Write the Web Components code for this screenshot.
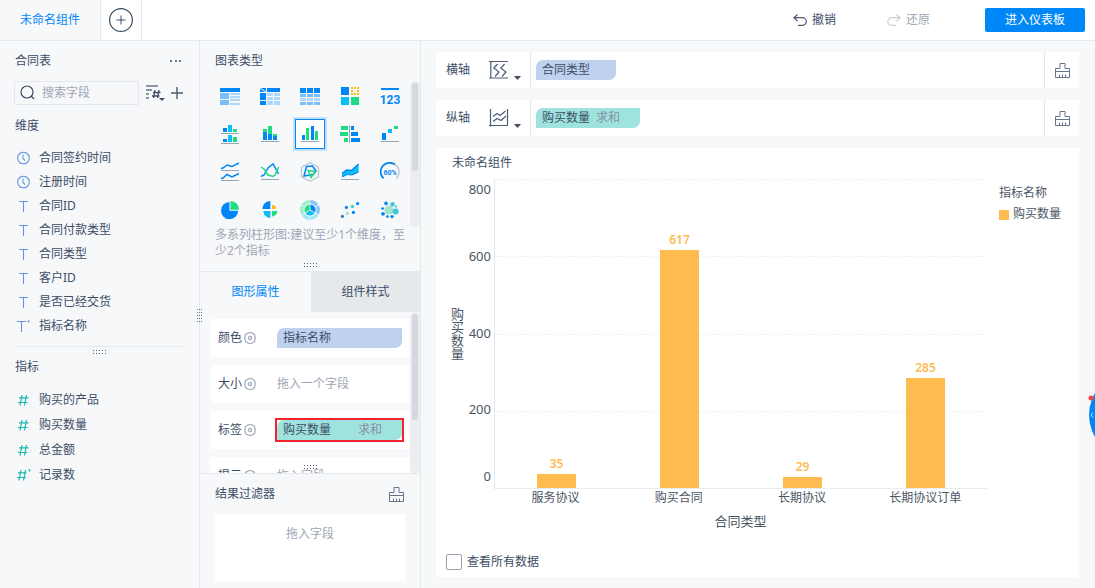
<!DOCTYPE html>
<html lang="zh-CN">
<head>
<meta charset="utf-8">
<title>未命名组件</title>
<style>
  body {
    margin: 0;
    overflow: hidden;
    font: 12px/20px "Noto Sans", "Noto Sans CJK SC", sans-serif;
    color: #3d4d66;
    background: #f7f8fa;
    --line: #e6e9ec;
    --blue: #0087f7;
    --muted: #9ea6b4;
    --dim: #bed2ef;
    --measure: #9fe3df;
    --bar: #fdbb50;
  }
</style>
</head>
<body>
<bi-app></bi-app>

<script>
const B = '#0087f5', C = '#0cbff2', G = '#1fdc80', L = '#aed7fb', M = '#7abef8', Y = '#f9be12', S = '#9ba6b5', D = '#3d4d66';
const r = (x, y, w, h, f) => `<rect x="${x}" y="${y}" width="${w}" height="${h}" fill="${f}"/>`;
const dot = (x, y, q, f) => `<circle cx="${x}" cy="${y}" r="${q}" fill="${f}"/>`;
const pl = (p, c, w = 1.5) => `<path d="${p}" fill="none" stroke="${c}" stroke-width="${w}"/>`;
const base = r(1, 17, 18, 1, S);
const ring = () => {
  let s = '';
  for (let i = 0; i < 6; i++) {
    s += `<circle cx="10" cy="10" r="8.2" fill="none" stroke="${['#8cc4fa', '#9fe8f8', '#9fe8f8', '#9eeec4', '#9eeec4', '#8cc4fa'][i]}" stroke-width="3.4" stroke-dasharray="7.8 43.72" transform="rotate(${i * 60 - 28} 10 10)"/>`;
  }
  return s;
};
const grid3 = (xs, ys, w, h, f) => ys.map(y => xs.map(x => r(x, y, w, h, f)).join('')).join('');

/* name: [width, height, drawing] */
const ICONS = {
  table: [20, 20, r(0, 2, 20, 4, B) + r(0, 7, 9, 6, M) + r(0, 14, 9, 5, M) + grid3([10], [7, 10, 13, 17], 10, 2, L)],
  cross: [20, 20, r(0, 2, 6, 4, B) + pl('M0 2L6 6', '#fff', 1) + r(7, 2, 13, 4, B) + r(0, 7, 6, 7, B) + r(0, 15, 6, 4, B) + grid3([7, 14], [7, 11, 15], 6, 3, L) + r(7, 15, 6, 4, L) + r(14, 15, 6, 4, L)],
  detail: [20, 20, grid3([0, 7, 14], [2], 6, 5, B) + grid3([0, 7, 14], [8], 6, 3, M) + grid3([0, 7, 14], [12], 6, 3, L) + grid3([0, 7, 14], [16], 6, 3, M)],
  color: [20, 20, r(1, 1, 8, 8, B) + grid3([11, 14, 17], [1, 7], 2, 2, Y) + r(11, 4, 2, 2, Y) + r(17, 4, 2, 2, Y) + r(1, 11, 8, 8, C) + r(11, 11, 8, 8, G)],
  kpi: [20, 20, r(1, 2, 18, 2, B) + `<text x="10" y="18" text-anchor="middle" font-family="Roboto, sans-serif" font-weight="700" font-size="12" fill="${B}">123</text>`],
  split: [20, 20, r(3, 4, 4, 4, B) + r(8, 1, 4, 7, C) + r(13, 5, 4, 3, G) + r(1, 9, 18, 1, S) + r(3, 15, 4, 3, B) + r(8, 11, 4, 7, C) + r(13, 13, 4, 5, G) + r(1, 19, 18, 1, S)],
  stack: [20, 20, r(3, 5, 4, 3, G) + r(3, 8, 4, 8, B) + r(8, 2, 4, 8, G) + r(8, 10, 4, 6, B) + r(13, 10, 4, 2, G) + r(13, 12, 4, 4, B) + base],
  multi: [20, 20, r(2, 11, 3, 5, B) + r(6, 4, 3, 12, G) + r(11, 2, 3, 14, B) + r(15, 7, 3, 9, G) + base],
  compare: [20, 20, r(9, 1, 1, 18, S) + r(1, 2, 7, 4, G) + r(0, 8, 8, 4, G) + r(4, 14, 4, 4, G) + r(11, 2, 3, 4, B) + r(11, 8, 7, 4, B) + r(11, 14, 9, 4, B)],
  fall: [20, 20, r(2, 9, 4, 7, B) + r(8, 5, 4, 4, C) + r(14, 2, 4, 3, G) + base],
  lines: [20, 20, pl('M1 6.500L3 6L7 3L12 4.500L19 1', B) + r(1, 8, 18, 1, S) + pl('M1 16.500L3 16L7 12.500L12 15L19 11.500', B) + r(1, 18, 18, 1, S)],
  line: [20, 20, pl('M1 14.500L4 13L8 6L13 2L18.600 12', B) + pl('M1 5L4 7L8 13L13 14.500L15 13L18.600 5', G) + base],
  radar: [20, 20, pl('M10 .7L18.500 5.300V14.700L10 19.300L1.500 14.700V5.300Z', '#bcc5d0', 1.3) + pl('M6.500 4.500L12.500 4L16 9L13 12.500L4 14Z', B, 1.6) + pl('M8 8.500L15.500 9.500L11 15.500Z', G, 1.6)],
  area: [20, 20, `<path d="M2 11.500L6.500 8L11.500 8.500L18.600 2V10L12 13L7.500 12.500L2 15Z" fill="${C}"/>` + pl('M2 11.500L6.500 8L11.500 8.500L18.600 2', B, 1.4) + pl('M2 15L7.500 12.500L12 13L18.600 10', B, 1) + base],
  gauge: [20, 20, pl('M3.600 16.400A9 9 0 0 1 15 2.500', B, 1.8) + pl('M15 2.500A9 9 0 0 1 16.400 16.400', '#c6ccd4', 1.6) + `<text x="10" y="13" text-anchor="middle" font-family="Roboto, sans-serif" font-weight="700" font-size="7" fill="${B}">60%</text>`],
  pie: [20, 20, `<path d="M9.500 2A8.600 8.600 0 1 0 18.200 10.800H9.500Z" fill="${B}"/><path d="M10.500 1A8.600 8.600 0 0 1 19 9.800H10.500Z" fill="${G}"/>`],
  rose: [20, 20, `<path d="M10.400 9V1A8 8 0 0 0 2.400 9Z" fill="${B}"/><path d="M12 9V5A4 4 0 0 1 16 9Z" fill="${Y}"/><path d="M10.400 11V18A7 7 0 0 1 3.400 11Z" fill="${C}"/><path d="M12 11V16.400A5.400 5.400 0 0 0 17.400 11Z" fill="${G}"/>`],
  sun: [20, 20, ring() + `<path d="M10 10V4.500A5.500 5.500 0 0 1 14.800 12.700Z" fill="${B}"/><path d="M10 10L14.800 12.700A5.500 5.500 0 0 1 5.200 12.700Z" fill="${C}"/><path d="M10 10L5.200 12.700A5.500 5.500 0 0 1 10 4.500Z" fill="${G}"/>` + pl('M10 10V4M10 10L15.500 13.100M10 10L4.500 13.100', '#fff', .7)],
  scatter: [20, 20, dot(2.4, 16.4, 1.6, '#3677c4') + dot(6.4, 7.4, 1.6, B) + dot(12.4, 6.4, 1.6, '#43c5d8') + dot(7.4, 13.4, 1.6, '#9fe5cb') + dot(13.4, 12.4, 1.6, B) + dot(17.6, 3.6, 1.6, B)],
  bubble: [20, 20, dot(9, 10, 4.6, '#9fe5cb') + dot(6, 3.4, 1.8, B) + dot(12.6, 4.2, 2.2, '#43c5d8') + dot(15.6, 11.6, 3, '#43c5d8') + dot(2.6, 8.6, 1.4, B) + dot(3, 13.8, 1.9, B) + dot(7.4, 16.6, 1.4, B) + dot(12, 16.6, 1.7, B) + dot(16, 6.6, 1.1, '#43c5d8')],
  plusRing: [24, 24, `<circle cx="12" cy="12" r="11.400" fill="#fff" stroke="${D}" stroke-width="1.200"/>` + pl('M7.500 12H16.500M12 7.500V16.500', D, 1)],
  undo: [14, 14, pl('M4.500 1.500L1 4.700L4.500 8M1 4.700H9.500A3.600 3.600 0 0 1 9.500 12.300H5', '#4b5a70', 1.2)],
  redo: [14, 14, pl('M9.500 1.500L13 4.700L9.500 8M13 4.700H4.500A3.600 3.600 0 0 0 4.500 12.300H9', '#ccd1d8', 1.2)],
  more: [12, 4, r(0, 1, 2, 2, '#66758c') + r(5, 1, 2, 2, '#66758c') + r(9, 1, 2, 2, '#66758c')],
  search: [16, 16, `<circle cx="7" cy="7" r="6" fill="none" stroke="${D}" stroke-width="1.200"/>` + pl('M11.300 11.300L14 14', D, 1.3)],
  sort: [20, 20, r(0, 2, 12, 2, '#8b95a5') + r(0, 6, 6, 2, '#8b95a5') + r(0, 10, 3, 2, '#8b95a5') + r(0, 14, 3, 2, '#8b95a5') + pl('M9 7L7.500 15M13 7L11.500 15M7 9.500H14.500M6 13H13.500', D, 1.3) + `<path d="M13 15H19L16 18Z" fill="${D}"/>`],
  plus: [12, 12, pl('M0 6H12M6 0V12', '#4b5a70', 1.4)],
  clock: [14, 14, pl('M6.500 1.200A5.800 5.800 0 1 1 6.490 1.200M6 3.500V7.500L8 9.500', '#6296dc', 1.1)],
  text: [14, 14, pl('M2 2.500H11M6.500 2.500V13', '#6296dc', 1.1)],
  textStar: [14, 14, pl('M0 2.500H9M4.500 2.500V13', '#6296dc', 1.1) + pl('M11.500 1V3.500M10.500 2L12.500 3M12.500 2L10.500 3', '#6296dc', .8)],
  hash: [14, 14, pl('M5 2L3 12.500M9.500 2L7.500 12.500M2 4.800H11.500M1 9.500H10.500', '#1ab8ac', 1.2)],
  hashStar: [14, 14, pl('M4 2L2 12.500M8.500 2L6.500 12.500M1 4.800H9.500M0 9.500H9', '#1ab8ac', 1.2) + pl('M12.500 1V3.500M11.500 2L13.500 3M13.500 2L11.500 3', '#1ab8ac', .8)],
  brush: [15, 15, pl('M.5 14.500V5.500H5V.5H10V5.500H14.500V14.500ZM.5 8.500H14.500M4.500 14V11.500M7.500 14V11.500M10.500 14V11.500', '#66758c', 1)],
  gear: [12, 12, pl('M4 1Q6 0 8 1L10.500 2.500L11 5L11.400 6L11 7L10.500 9.500L8 11Q6 12 4 11L1.500 9.500L1 7L.6 6L1 5L1.500 2.500Z', '#a3abb8', 1.2) + `<circle cx="6" cy="6" r="1.600" fill="none" stroke="#a3abb8" stroke-width="1.300"/>`],
  axisX: [20, 20, pl('M0 1.500H19M0 18H19M1.800 1.500V18M8.600 4L4.800 8L10 12L6 16.500M15.600 4L11.800 8L17 12L13 16.500', '#4b5c75', 1.2)],
  axisY: [20, 20, pl('M1.500 1V18.500M0 17.500H19M18.500 1V17.500M4 8.500L8 5.500L11 7.500L16.500 3M4 13.500L8 10.500L12 12.500L17 8', '#4b5c75', 1.2)],
  caret: [8, 4, `<path d="M0 0H7L3.500 4Z" fill="${D}"/>`],
  gripH: [13, 5, grid3([0, 3, 6, 9, 12], [0, 3], 1, 1, '#56647a')],
  gripV: [5, 13, grid3([0, 2, 4], [0, 3, 6, 9, 12], 1, 1, '#6b788c')],
  helper: [8, 46, dot(45, 23, 43, B) + pl('M6 20.500L4 23L6 25.500', '#bfe0ff', 1) + dot(4, 6, 2.5, '#fb4343')]
};

const define = (name, html, setup) => {
  const t = document.createElement('template');
  t.innerHTML = html;
  customElements.define(name, class extends HTMLElement {
    constructor() {
      super();
      this.attachShadow({ mode: 'open' }).append(t.content.cloneNode(true));
    }
    connectedCallback() {
      if (setup) setup(this, this.shadowRoot);
    }
  });
};
const RESET = `
  * { box-sizing: border-box; }
  button { font: inherit; color: inherit; background: none; border: 0; padding: 0; margin: 0; cursor: pointer; }
  p, h2, h3, ul { margin: 0; padding: 0; font: inherit; }
`;

define('bi-icon', `<style>:host { display: inline-flex; flex: none; } svg { display: block; overflow: hidden; }</style>`, (el, root) => {
  const [w, h, art] = ICONS[el.getAttribute('name')];
  const box = document.createElement('template');
  box.innerHTML = `<svg width="${w}" height="${h}" viewBox="0 0 ${w} ${h}" aria-hidden="true">${art}</svg>`;
  root.append(box.content);
});

define('bi-scrollbar', `
<style>
  :host { display: flex; flex: none; width: 10px; padding: 2px; box-sizing: border-box; border-radius: 5px; background: #ecedf1; }
  i { width: 6px; border-radius: 3px; height: var(--thumb); background: #d6d8df; }
</style><i></i>`);

define('bi-header', `
<style>${RESET}
  :host { display: flex; align-items: stretch; height: 41px; box-sizing: border-box; background: #fff; border-bottom: 1px solid var(--line); }
  .tab { width: 101px; background: #f7f8fa; border-right: 1px solid var(--line); color: var(--blue); }
  .add { width: 41px; display: grid; place-items: center; border-right: 1px solid var(--line); }
  nav { display: flex; align-items: center; margin-left: auto; padding-right: 10px; }
  nav button { display: flex; align-items: center; gap: 5px; }
  .redo { margin: 0 55px 0 51px; color: var(--muted); }
  nav .go { justify-content: center; width: 100px; height: 24px; border-radius: 2px; background: var(--blue); color: #fff; }
</style>
<button class="tab">未命名组件</button>
<button class="add" aria-label="添加组件"><bi-icon name="plusRing"></bi-icon></button>
<nav>
  <button><bi-icon name="undo"></bi-icon>撤销</button>
  <button class="redo"><bi-icon name="redo"></bi-icon>还原</button>
  <button class="go">进入仪表板</button>
</nav>`);

define('bi-field', `
<style>
  :host { display: flex; align-items: center; height: var(--row, 24px); padding-left: 2px; }
  .icon { display: flex; width: 22px; }
</style><div class="icon"></div><slot></slot>`, (el, root) => {
  root.querySelector('.icon').innerHTML = `<bi-icon name="${el.getAttribute('icon')}"></bi-icon>`;
});

define('bi-fields', `
<style>${RESET}
  :host { display: block; padding: 0 15px; border-right: 1px solid var(--line); }
  header { display: flex; align-items: center; justify-content: space-between; height: 40px; padding-right: 2px; }
  .find { display: flex; align-items: center; margin-left: -1px; }
  label { display: flex; align-items: center; width: 125px; height: 24px; padding: 0 5px; gap: 6px; border: 1px solid #e3e6ea; border-radius: 2px; }
  input { flex: 1; min-width: 0; font: inherit; color: inherit; border: 0; padding: 0; outline: 0; background: none; }
  input::placeholder { color: var(--muted); opacity: 1; }
  .sort { margin: 0 5px 0 7px; }
  button { display: flex; }
  h3 { height: 41px; line-height: 42px; }
  .split { display: flex; justify-content: center; margin-top: 8px; padding-top: 3px; border-top: 1px solid var(--line); }
  .measures { --row: 25px; }
  .measures h3 { height: 32px; line-height: 24px; }
</style>
<header><h2>合同表</h2><button aria-label="更多"><bi-icon name="more"></bi-icon></button></header>
<div class="find">
  <label><bi-icon name="search"></bi-icon><input type="text" placeholder="搜索字段" aria-label="搜索字段"></label>
  <button class="sort" aria-label="排序"><bi-icon name="sort"></bi-icon></button>
  <button aria-label="添加字段"><bi-icon name="plus"></bi-icon></button>
</div>
<section>
  <h3>维度</h3>
  <bi-field icon="clock">合同签约时间</bi-field>
  <bi-field icon="clock">注册时间</bi-field>
  <bi-field icon="text">合同ID</bi-field>
  <bi-field icon="text">合同付款类型</bi-field>
  <bi-field icon="text">合同类型</bi-field>
  <bi-field icon="text">客户ID</bi-field>
  <bi-field icon="text">是否已经交货</bi-field>
  <bi-field icon="textStar">指标名称</bi-field>
</section>
<div class="split"><bi-icon name="gripH"></bi-icon></div>
<section class="measures">
  <h3>指标</h3>
  <bi-field icon="hash">购买的产品</bi-field>
  <bi-field icon="hash">购买数量</bi-field>
  <bi-field icon="hash">总金额</bi-field>
  <bi-field icon="hashStar">记录数</bi-field>
</section>`);

define('bi-chart-types', `
<style>${RESET}
  :host { display: block; border-bottom: 1px solid var(--line); }
  h2 { padding: 10px 15px 8px; }
  .area { display: flex; justify-content: space-between; padding-left: 13px; }
  .grid { display: grid; grid-template-columns: repeat(5, 34px); grid-auto-rows: 34px; gap: 4px 6px; }
  button { display: grid; place-items: center; }
  button[aria-pressed=true] { border: 1px solid var(--blue); margin: 2px; background: #fff; box-shadow: 0 0 0 2px #c3e1fa; }
  bi-scrollbar { height: 146px; margin-top: 2px; --thumb: 88px; }
  p { padding: 0 13px 0 15px; line-height: 16px; color: var(--muted); }
  .grip { display: flex; justify-content: center; align-items: center; height: 12px; }
</style>
<h2>图表类型</h2>
<div class="area"><div class="grid"></div><bi-scrollbar></bi-scrollbar></div>
<p>多系列柱形图:建议至少1个维度，至少2个指标</p>
<div class="grip"><bi-icon name="gripH"></bi-icon></div>`, (el, root) => {
  const types = { table: '分组表', cross: '交叉表', detail: '明细表', color: '颜色表格', kpi: '指标卡', split: '分区柱形图', stack: '堆积柱形图', multi: '多系列柱形图', compare: '对比柱状图', fall: '瀑布图', lines: '分区折线图', line: '多系列折线图', radar: '雷达图', area: '面积图', gauge: '仪表盘', pie: '饼图', rose: '玫瑰图', sun: '多层饼图', scatter: '散点图', bubble: '聚合气泡图' };
  root.querySelector('.grid').innerHTML = Object.entries(types).map(([k, v]) =>
    `<button aria-label="${v}" aria-pressed="${k === 'multi'}"><bi-icon name="${k}"></bi-icon></button>`).join('');
});

define('bi-chip', `
<style>
  :host { display: flex; align-items: center; height: 20px; padding: 0 6px; box-sizing: border-box; border-radius: 7px 0 7px 0; background: var(--dim); }
  :host([measure]) { background: var(--measure); }
  ::slotted(span) { color: #858fa3; margin-left: var(--agg-gap, 6px); padding-right: 14px; }
</style><slot></slot>`);

define('bi-prop', `
<style>${RESET}
  :host { display: grid; grid-template-columns: 59px 1fr; align-items: center; flex: none; height: 38px; padding: 0 8px; background: #fff; box-sizing: border-box; color: inherit; }
  .name { display: flex; align-items: center; gap: 2px; }
  button { display: flex; }
  ::slotted(em) { font-style: normal; color: var(--muted); }
</style>
<div class="name"><slot name="label"></slot><button aria-label="设置"><bi-icon name="gear"></bi-icon></button></div>
<slot></slot>`);

define('bi-props', `
<style>${RESET}
  :host { display: flex; flex-direction: column; flex: 1; min-height: 0; position: relative; }
  .tabs { display: grid; flex: none; grid-template-columns: 111px 1fr; }
  .tabs button { height: 40px; background: var(--line); }
  .tabs button[aria-selected=true] { background: none; color: var(--blue); }
  .body { display: flex; flex: 1; min-height: 0; overflow: hidden; }
  .cards { flex: 1; display: flex; flex-direction: column; gap: 8px; padding: 7px 0 0 10px; overflow: hidden; }
  bi-scrollbar { --thumb: 106px; }
  .mark { outline: 2px solid #f3242c; --agg-gap: auto; }
  .over { position: absolute; left: 50%; bottom: 3px; margin-left: -6px; display: flex; }
</style>
<div class="tabs" role="tablist"><button role="tab" aria-selected="true">图形属性</button><button role="tab" aria-selected="false">组件样式</button></div>
<div class="body">
  <div class="cards">
    <bi-prop><span slot="label">颜色</span><bi-chip>指标名称</bi-chip></bi-prop>
    <bi-prop><span slot="label">大小</span><em>拖入一个字段</em></bi-prop>
    <bi-prop><span slot="label">标签</span><div class="mark"><bi-chip measure>购买数量<span>求和</span></bi-chip></div></bi-prop>
    <bi-prop><span slot="label">提示</span><em>拖入字段</em></bi-prop>
  </div>
  <bi-scrollbar></bi-scrollbar>
</div>
<div class="over"><bi-icon name="gripH"></bi-icon></div>`);

define('bi-filter', `
<style>${RESET}
  :host { display: block; border-top: 1px solid var(--line); padding: 0 15px 7px; }
  header { display: flex; align-items: center; justify-content: space-between; height: 40px; }
  button { display: flex; padding-right: 1px; }
  .drop { height: 67px; padding-top: 10px; text-align: center; background: #fff; color: var(--muted); }
</style>
<header><h2>结果过滤器</h2><button aria-label="清空"><bi-icon name="brush"></bi-icon></button></header>
<div class="drop">拖入字段</div>`);

define('bi-config', `
<style>
  :host { display: flex; flex-direction: column; min-height: 0; position: relative; border-right: 1px solid var(--line); }
  .side { position: absolute; left: -3px; top: 268px; display: flex; }
</style>
<bi-chart-types></bi-chart-types><bi-props></bi-props><bi-filter></bi-filter>
<div class="side"><bi-icon name="gripV"></bi-icon></div>`);

define('bi-axis', `
<style>${RESET}
  :host { display: flex; align-items: stretch; height: 36px; background: #fff; }
  .name { display: flex; align-items: center; width: 95px; padding-left: 10px; border-right: 1px solid var(--line); }
  .kind { display: flex; align-items: flex-end; gap: 5px; margin-left: 19px; }
  .drop { flex: 1; display: flex; align-items: center; padding-left: 5px; }
  .clear { display: grid; place-items: center; width: 35px; border-left: 1px solid var(--line); }
</style>
<div class="name"><slot name="label"></slot><button class="kind" aria-label="坐标轴类型"></button></div>
<div class="drop"><slot></slot></div>
<button class="clear" aria-label="清空"><bi-icon name="brush"></bi-icon></button>`, (el, root) => {
  root.querySelector('.kind').innerHTML = `<bi-icon name="${el.getAttribute('icon')}"></bi-icon><bi-icon name="caret"></bi-icon>`;
});

define('bi-bar-chart', `
<style>${RESET}
  :host { flex: 1; min-height: 0; display: flex; flex-direction: column; background: #fff; }
  h2 { padding: 5px 16px 6px; }
  .chart { flex: 1; min-height: 0; display: grid; padding-left: 14px; color: #4a5563;
    grid-template: minmax(0, 1fr) 18px 28px / 14px 30px minmax(0, 1fr) 92px; }
  .ytitle { writing-mode: vertical-rl; text-orientation: upright; text-align: center; font-size: 13px; line-height: 14px; }
  .ticks { display: grid; grid-template-rows: 1fr 2fr 2fr 2fr 1fr; align-items: center; padding: 0 3px 3px 0; text-align: right; font-size: 13px; line-height: 20px; }
  .ticks > :first-child { align-self: start; }
  .ticks > :last-child { align-self: end; }
  .plot { display: grid; border-left: 1px solid #e2e6ed; border-bottom: 1px solid #e9ebee; }
  .lines, .bars { grid-area: 1 / 1; min-height: 0; }
  .lines { display: grid; grid-template-rows: repeat(4, 1fr); }
  .lines i { height: 1px; background: repeating-linear-gradient(90deg, #f4f5f6 0 9px, transparent 9px 12px); }
  .bars, .cats { display: grid; grid-template-columns: repeat(4, 1fr); }
  .bar { display: flex; flex-direction: column; justify-content: flex-end; align-items: center; color: var(--bar); font-weight: 600; }
  .bar i { flex: none; width: 39px; background: var(--bar); }
  .cats { grid-column: 3; text-align: center; line-height: 18px; }
  .xtitle { grid-column: 3; text-align: center; font-size: 13px; line-height: 28px; }
  .legend { padding: 4px 0 0 12px; }
  .legend div { display: flex; align-items: center; gap: 4px; line-height: 22px; }
  .legend i { width: 10px; height: 10px; margin-top: 2px; background: var(--bar); }
  label { display: flex; align-items: center; gap: 5px; padding: 17px 10px 5px; }
  input { appearance: none; width: 16px; height: 16px; margin: 0; border: 1px solid #97a1b0; border-radius: 2px; background: #fff; }
</style>
<h2>未命名组件</h2>
<div class="chart">
  <div class="ytitle">购买数量</div>
  <div class="ticks"><span>800</span><span>600</span><span>400</span><span>200</span><span>0</span></div>
  <div class="plot"><div class="lines"><i></i><i></i><i></i><i></i></div><div class="bars"></div></div>
  <div class="legend">指标名称<div><i></i>购买数量</div></div>
  <div class="cats"></div>
  <div class="xtitle">合同类型</div>
</div>
<label><input type="checkbox">查看所有数据</label>`, (el, root) => {
  const data = [['服务协议', 35], ['购买合同', 617], ['长期协议', 29], ['长期协议订单', 285]];
  root.querySelector('.bars').innerHTML = data.map(([, v]) => `<div class="bar">${v}<i style="height:${v / 8}%"></i></div>`).join('');
  root.querySelector('.cats').innerHTML = data.map(([n]) => `<span>${n}</span>`).join('');
});

define('bi-canvas', `
<style>
  :host { display: flex; flex-direction: column; gap: 12px; min-width: 0; min-height: 0; padding: 11px 16px 11px 15px; }
</style>
<bi-axis icon="axisX"><span slot="label">横轴</span><bi-chip style="width:80px">合同类型</bi-chip></bi-axis>
<bi-axis icon="axisY"><span slot="label">纵轴</span><bi-chip measure>购买数量<span>求和</span></bi-chip></bi-axis>
<bi-bar-chart></bi-bar-chart>`);

define('bi-app', `
<style>${RESET}
  :host { display: grid; height: 100vh; grid-template: auto minmax(0, 1fr) / 200px 221px minmax(0, 1fr); }
  bi-header { grid-column: 1 / -1; }
  .help { position: fixed; right: 0; top: 392px; display: flex; }
</style>
<bi-header></bi-header>
<bi-fields></bi-fields>
<bi-config></bi-config>
<bi-canvas></bi-canvas>
<button class="help" aria-label="帮助"><bi-icon name="helper"></bi-icon></button>`);
</script>
</body>
</html>
